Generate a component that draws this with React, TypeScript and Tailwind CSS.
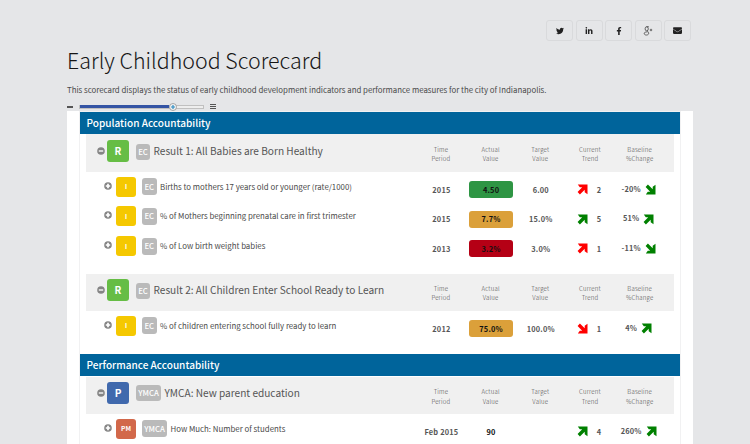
import { FaTwitter, FaLinkedinIn, FaFacebookF, FaEnvelope } from 'react-icons/fa'

type Row = {
    tag: string;
    tagColor: string;
    group: string;
    name: string;
    period: string;
    actual: string;
    actualColor: string;
    target: string;
    trendColor: string;
    trendUp: boolean;
    count: string;
    change: string;
    changeUp: boolean;
}

const birthRows: Row[] = [
    { tag: 'I', tagColor: 'bg-[#f5c800] text-[6.5px]', group: 'EC', name: 'Births to mothers 17 years old or younger (rate/1000)', period: '2015', actual: '4.50', actualColor: 'bg-[#2e9544]', target: '6.00', trendColor: 'text-[#ff0000]', trendUp: true, count: '2', change: '-20%', changeUp: false },
    { tag: 'I', tagColor: 'bg-[#f5c800] text-[6.5px]', group: 'EC', name: '% of Mothers beginning prenatal care in first trimester', period: '2015', actual: '7.7%', actualColor: 'bg-[#dba03a]', target: '15.0%', trendColor: 'text-[#008000]', trendUp: true, count: '5', change: '51%', changeUp: true },
    { tag: 'I', tagColor: 'bg-[#f5c800] text-[6.5px]', group: 'EC', name: '% of Low birth weight babies', period: '2013', actual: '3.2%', actualColor: 'bg-[#b50015]', target: '3.0%', trendColor: 'text-[#ff0000]', trendUp: true, count: '1', change: '-11%', changeUp: false },
]

const schoolRows: Row[] = [
    { tag: 'I', tagColor: 'bg-[#f5c800] text-[6.5px]', group: 'EC', name: '% of children entering school fully ready to learn', period: '2012', actual: '75.0%', actualColor: 'bg-[#dba03a]', target: '100.0%', trendColor: 'text-[#ff0000]', trendUp: false, count: '1', change: '4%', changeUp: true },
]

const parentRows: Row[] = [
    { tag: 'PM', tagColor: 'bg-[#d2684a] text-[6.5px]', group: 'YMCA', name: 'How Much: Number of students', period: 'Feb 2015', actual: '90', actualColor: '', target: '', trendColor: 'text-[#008000]', trendUp: true, count: '4', change: '260%', changeUp: true },
]

const columns = [
    ['Time', 'Period'],
    ['Actual', 'Value'],
    ['Target', 'Value'],
    ['Current', 'Trend'],
    ['Baseline', '%Change'],
]

function Arrow({ up, className }: { up: boolean; className: string }) {
    return (
        <svg viewBox="0 0 11 11" className={`h-[11px] w-[11px] shrink-0 ${up ? '' : 'rotate-90'} ${className}`}>
            <path d="M0.8 0.5H10.5V10.2L7.7 8.2V5.8L2.9 10.4L0.6 8.1L5.2 3.3H2.8Z" fill="currentColor" />
        </svg>
    )
}

function Toggle({ open }: { open: boolean }) {
    return (
        <svg viewBox="0 0 8 8" className="h-[8px] w-[8px] shrink-0">
            <circle cx="4" cy="4" r="3.8" fill="#858585" />
            {open ? (
                <path d="M1.8 4H6.2" stroke="#fff" strokeWidth="1.3" />
            ) : (
                <path d="M1.8 4H6.2M4 1.8V6.2" stroke="#fff" strokeWidth="1.7" />
            )}
        </svg>
    )
}

function SectionTitle({ title }: { title: string }) {
    return (
        <h2 className="flex h-[22px] items-center bg-[#00649b] pl-[6.5px] text-[10.05px] leading-none font-medium text-white">
            {title}
        </h2>
    )
}

function ResultHeader({ tag, tagColor, group, wide, title, size }: { tag: string; tagColor: string; group: string; wide?: boolean; title: string; size: string }) {
    return (
        <div className={`mr-[6px] ml-[6px] flex justify-between bg-[#f0f0f0] ${size}`}>
            <div className="flex h-[22px] items-center">
                <div className="ml-[11px]"><Toggle open /></div>
                <span className={`ml-[2px] flex h-[22px] w-[22px] items-center justify-center rounded-[3px] text-[10px] leading-none font-bold text-white ${tagColor}`}>{tag}</span>
                <span className={`ml-[7px] flex h-[16px] items-center justify-center rounded-[3px] bg-[#bababa] text-[7.8px] leading-none font-medium text-white ${wide ? 'mb-[1px] w-[25px]' : 'mt-[2px] w-[14px]'}`}>{group}</span>
                <span className="mt-[1px] ml-[3.5px] text-[10.1px] leading-none whitespace-nowrap text-[#555]">{title}</span>
            </div>
            <div className="mr-[9.5px] grid grid-cols-[repeat(5,49.7px)] pt-[5px] text-center text-[6px] leading-[9.5px] font-light tracking-[0.2px] text-[#444]">
                {columns.map(([top, bottom]) => (
                    <div key={top}>{top}<br />{bottom}</div>
                ))}
            </div>
        </div>
    )
}

function IndicatorRow({ row }: { row: Row }) {
    return (
        <div className="flex h-[29.8px] justify-between pr-[15px] pl-[24px]">
            <div className="flex h-[24px] items-center">
                <div className="mb-[2px]"><Toggle open={false} /></div>
                <span className={`ml-[4px] flex h-[20px] w-[20px] items-center justify-center rounded-[3px] leading-none font-bold text-white ${row.tagColor}`}>{row.tag}</span>
                <span className={`ml-[6px] flex h-[17px] items-center justify-center rounded-[3px] bg-[#bababa] text-[7.8px] leading-none font-medium text-white ${row.group === 'EC' ? 'w-[14.5px]' : 'w-[25px]'}`}>{row.group}</span>
                <span className="ml-[3.5px] text-[7.85px] leading-none whitespace-nowrap text-[#4a4a4a]">{row.name}</span>
            </div>
            <div className="grid grid-cols-[repeat(5,49.7px)] items-center text-center text-[7.4px] leading-none font-bold tracking-[0.2px] text-[#555]">
                <span className="whitespace-nowrap">{row.period}</span>
                <span className={`mx-auto flex h-[17px] w-[44.5px] items-center justify-center rounded-[3px] text-[#111] ${row.actualColor}`}>{row.actual}</span>
                <span>{row.target}</span>
                <span className="flex items-center pl-[11px]">
                    <Arrow up={row.trendUp} className={row.trendColor} />
                    <span className="ml-[9px]">{row.count}</span>
                </span>
                <span className="flex items-center justify-center pr-[3px]">
                    <span className="mr-[4px] mb-[2px]">{row.change}</span>
                    <Arrow up={row.changeUp} className="text-[#008000]" />
                </span>
            </div>
        </div>
    )
}

export default function App() {
    const buttonClass = 'flex h-[21px] w-[27px] items-center justify-center rounded-[3px] border border-[#d9dadc] text-[#222]'

    return (
        <main className="h-[444px] w-[750px] overflow-hidden bg-[#e5e6e8] font-['Noto_Sans_CJK_SC','Open_Sans',sans-serif]">
            <div className="flex justify-end gap-[2.5px] pt-[20px] pr-[59px]">
                <a className={buttonClass}><FaTwitter size={8} /></a>
                <a className={buttonClass}><FaLinkedinIn size={8} /></a>
                <a className={buttonClass}><FaFacebookF size={8} /></a>
                <a className={buttonClass}>
                    <svg viewBox="0 0 10 10" className="h-[10px] w-[10px]" fill="none" stroke="#444" strokeWidth="0.8">
                        <ellipse cx="3.7" cy="2.8" rx="1.6" ry="2" />
                        <path d="M3.4 0.7H5.8M4.4 4.6C3.8 5.3 5.7 5.7 5.7 7.3C5.7 9.6 1.2 9.6 1.2 7.5C1.2 6.2 3 5.9 4.6 5.9M6.8 4H9.2M8 2.8V5.2" />
                    </svg>
                </a>
                <a className={buttonClass}><FaEnvelope size={9} /></a>
            </div>

            <h1 className="mt-[4px] pl-[67px] text-[21.4px] leading-[30px] font-light whitespace-nowrap text-[#151515]">Early Childhood Scorecard</h1>
            <p className="mt-[8px] pl-[67px] text-[7.85px] leading-[14px] whitespace-nowrap text-[#4a4a4a]">
                This scorecard displays the status of early childhood development indicators and performance measures for the city of Indianapolis.
            </p>

            {/* zoom slider */}
            <div className="flex h-[14px] items-center pt-[5px] pl-[67px]">
                <span className="h-[2px] w-[6px] bg-[#555]" />
                <div className="ml-[6px] flex h-[4px] w-[125px] items-center border border-[#c0c0c0] bg-[#eee]">
                    <div className="h-[3px] w-[89px] shrink-0 bg-[#3454a4]" />
                    <svg viewBox="0 0 8 8" className="mt-[1px] h-[8px] w-[8px] shrink-0">
                        <circle cx="4" cy="4" r="3.5" fill="#f4f4f4" stroke="#888" strokeWidth="0.7" />
                        <path d="M2 4H6M4 2V6" stroke="#2c8ac0" strokeWidth="1.2" />
                    </svg>
                </div>
                <svg viewBox="0 0 6 6" className="ml-[6px] h-[6px] w-[6px]" stroke="#555">
                    <path d="M0 0.5H6M0 2.5H6M0 4.5H6" />
                </svg>
            </div>

            <div className="mr-[57px] ml-[67px] h-[333px] bg-white pt-[1px] pr-[13px] pl-[13px]">
                <div className="h-[332px] shadow-[0_0_0_1px_#f1f1f2]">
                    <SectionTitle title="Population Accountability" />
                    <ResultHeader tag="R" tagColor="bg-[#66bd45]" group="EC" title="Result 1: All Babies are Born Healthy" size="h-[37.5px] pt-[5.5px]" />
                    <div className="h-[102px] pt-[3px]">
                        {birthRows.map((row) => (
                            <IndicatorRow key={row.name} row={row} />
                        ))}
                    </div>
                    <ResultHeader tag="R" tagColor="bg-[#66bd45]" group="EC" title="Result 2: All Children Enter School Ready to Learn" size="h-[37px] pt-[5px]" />
                    <div className="h-[43.5px] pt-[3px]">
                        <IndicatorRow row={schoolRows[0]} />
                    </div>
                    <SectionTitle title="Performance Accountability" />
                    <ResultHeader tag="P" tagColor="bg-[#4069ad]" group="YMCA" wide title="YMCA: New parent education" size="mt-[1px] h-[36.5px] pt-[5px]" />
                    <div className="pt-[3px]">
                        <IndicatorRow row={parentRows[0]} />
                    </div>
                </div>
            </div>
        </main>
    )
}
